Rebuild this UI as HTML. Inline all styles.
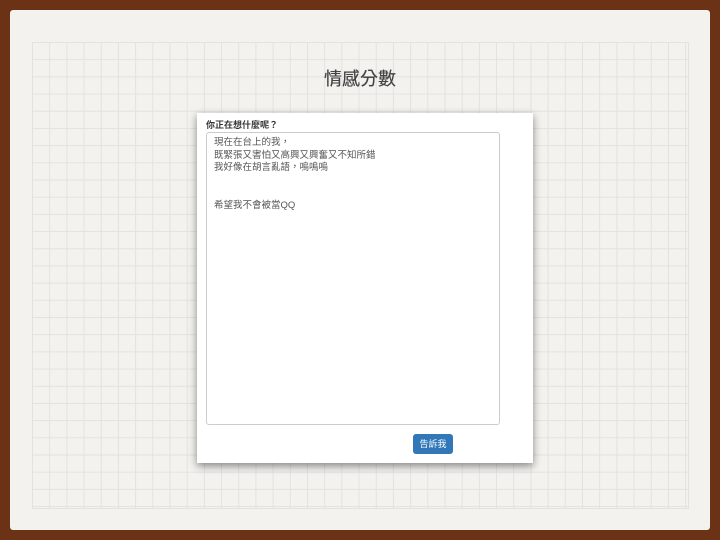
<!DOCTYPE html>
<html><head><meta charset="utf-8"><style>
body{margin:0;width:720px;height:540px;background:#6b3216;position:relative;overflow:hidden;font-family:"Liberation Sans","Noto Sans CJK TC",sans-serif}
.paper{position:absolute;left:10px;top:10px;width:700px;height:520px;background:#f3f2ef;border-radius:3px}
.grid{position:absolute;left:32px;top:42px;width:656px;height:466px;
background-image:linear-gradient(#e4e2dd 1px,transparent 1px),linear-gradient(90deg,#e4e2dd 1px,transparent 1px);background-size:17.2px 17.2px;border-right:1px solid #e4e2dd;border-bottom:1px solid #e4e2dd}
h1{position:absolute;left:0;width:720px;top:65px;margin:0;text-align:center;font-size:18px;font-weight:normal;color:#444;text-shadow:0 0 0.4px #444}
.card{position:absolute;left:197px;top:113px;width:336px;height:350px;background:#fff;box-shadow:0 3px 8px rgba(0,0,0,.45)}
.lab{position:absolute;left:9px;top:5px;font-size:9px;font-weight:bold;color:#333}
.ta{position:absolute;left:9px;top:19px;width:294px;height:293px;border:1px solid #ccc;border-radius:3px;box-sizing:border-box;padding:4px 7px;font-size:9.5px;line-height:12.5px;color:#555}
.btn{position:absolute;left:216px;top:321px;width:40px;height:20px;background:#3278b8;border-radius:3px;color:#fff;font-size:9px;text-align:center;line-height:20px}
</style></head><body>
<div class="paper"></div><div class="grid"></div>
<h1>情感分數</h1>
<div class="card"><div class="lab">你正在想什麼呢？</div>
<div class="ta">現在在台上的我，<br>既緊張又害怕又高興又興奮又不知所錯<br>我好像在胡言亂語，嗚嗚嗚<br><br><br>希望我不會被當QQ</div>
<div class="btn">告訴我</div></div>
</body></html>
